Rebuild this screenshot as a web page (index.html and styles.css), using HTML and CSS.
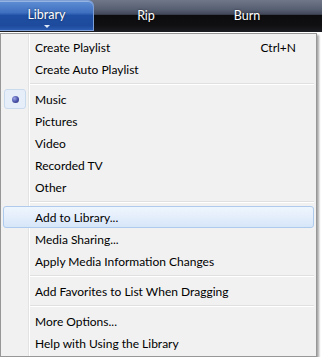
FILE: index.html
```html
<!DOCTYPE html>
<html lang="en">
<head>
    <meta charset="UTF-8">
    <title>Library Menu</title>
    <link rel="stylesheet" href="styles.css">
</head>
<body>
    <div class="tabs">
        <div class="tab tab-library active">Library<span class="caret"></span></div>
        <div class="tab tab-rip">Rip</div>
        <div class="tab tab-burn">Burn</div>
    </div>
    <div class="menu">
        <div class="item"><span class="mark"></span><span class="label">Create Playlist</span><span class="key">Ctrl+N</span></div>
        <div class="item"><span class="mark"></span><span class="label">Create Auto Playlist</span></div>
        <div class="sep"></div>
        <div class="item"><span class="mark checked"><span class="dot"></span></span><span class="label">Music</span></div>
        <div class="item"><span class="mark"></span><span class="label">Pictures</span></div>
        <div class="item"><span class="mark"></span><span class="label">Video</span></div>
        <div class="item"><span class="mark"></span><span class="label">Recorded TV</span></div>
        <div class="item"><span class="mark"></span><span class="label">Other</span></div>
        <div class="sep"></div>
        <div class="item hover"><span class="mark"></span><span class="label">Add to Library...</span></div>
        <div class="item"><span class="mark"></span><span class="label">Media Sharing...</span></div>
        <div class="item"><span class="mark"></span><span class="label">Apply Media Information Changes</span></div>
        <div class="sep"></div>
        <div class="item"><span class="mark"></span><span class="label">Add Favorites to List When Dragging</span></div>
        <div class="sep"></div>
        <div class="item"><span class="mark"></span><span class="label">More Options...</span></div>
        <div class="item"><span class="mark"></span><span class="label">Help with Using the Library</span></div>
    </div>
</body>
</html>
```
FILE: styles.css
```css
body {
    margin: 0;
    padding: 0;
    background: #ffffff;
    font-family: Lato, "Open Sans", sans-serif;
    font-size: 12px;
    color: #000;
    overflow: hidden;
}
.tabs {
    display: flex;
    height: 32px;
    background: linear-gradient(to bottom, #6f7789 0%, #565e71 30%, #424859 45%, #0c0c0e 47%, #101012 80%, #1c1d22 100%);
    color: #fff;
}
.tab {
    display: flex;
    align-items: center;
    justify-content: center;
    height: 32px;
    padding-bottom: 2px;
    box-sizing: border-box;
    font-size: 12.5px;
    text-shadow: 0 0 2px rgba(0, 0, 0, 0.6);
}
.tab-library {
    width: 94px;
    position: relative;
}
.tab-rip {
    width: 104px;
}
.tab-burn {
    width: 98px;
}
.tab.active {
    height: 31px;
    border: 1px solid #7d9fd6;
    border-left: none;
    border-radius: 0 6px 0 0;
    background: linear-gradient(to bottom, #5f8ed4 0%, #3f70c0 40%, #1f4fa3 50%, #1d4a9c 85%, #2b5cb2 100%);
    box-shadow: inset 0 1px 0 rgba(255, 255, 255, 0.35);
}
.caret {
    position: absolute;
    left: 44px;
    bottom: 2px;
    width: 0;
    height: 0;
    border-left: 3px solid transparent;
    border-right: 3px solid transparent;
    border-top: 3px solid #dfe9f8;
}
.menu {
    width: 317px;
    box-sizing: border-box;
    margin-top: 1px;
    padding: 2px;
    border: 1px solid #979797;
    background: linear-gradient(to right, #f1f1f1 0, #f1f1f1 27px, #e2e3e3 27px, #e2e3e3 28px, #ffffff 28px, #ffffff 29px, #f1f1f1 29px);
    box-shadow: 2px 2px 2px rgba(0, 0, 0, 0.35);
}
.item {
    display: flex;
    align-items: center;
    height: 22px;
    box-sizing: border-box;
    border: 1px solid transparent;
    border-radius: 3px;
}
.item.hover {
    border-color: #aecbee;
    background: linear-gradient(to bottom, #eef5fd 0%, #e4eefb 50%, #d6e6f9 100%);
}
.mark {
    width: 20px;
    height: 18px;
    display: flex;
    align-items: center;
    justify-content: center;
    border: 1px solid transparent;
    border-radius: 3px;
}
.mark.checked {
    border-color: #c9d9ee;
    background: #e6eef9;
}
.dot {
    width: 7px;
    height: 7px;
    border-radius: 50%;
    background: radial-gradient(circle at 35% 35%, #9aa4e6 0%, #4a52a8 55%, #262c72 100%);
}
.label {
    margin-left: 9px;
    flex: 1;
}
.key {
    margin-right: 17px;
}
.sep {
    height: 8px;
    margin-left: 27px;
    background: linear-gradient(to bottom, transparent 0, transparent 3px, #e0e0e0 3px, #e0e0e0 4px, #ffffff 4px, #ffffff 5px, transparent 5px);
}
```
